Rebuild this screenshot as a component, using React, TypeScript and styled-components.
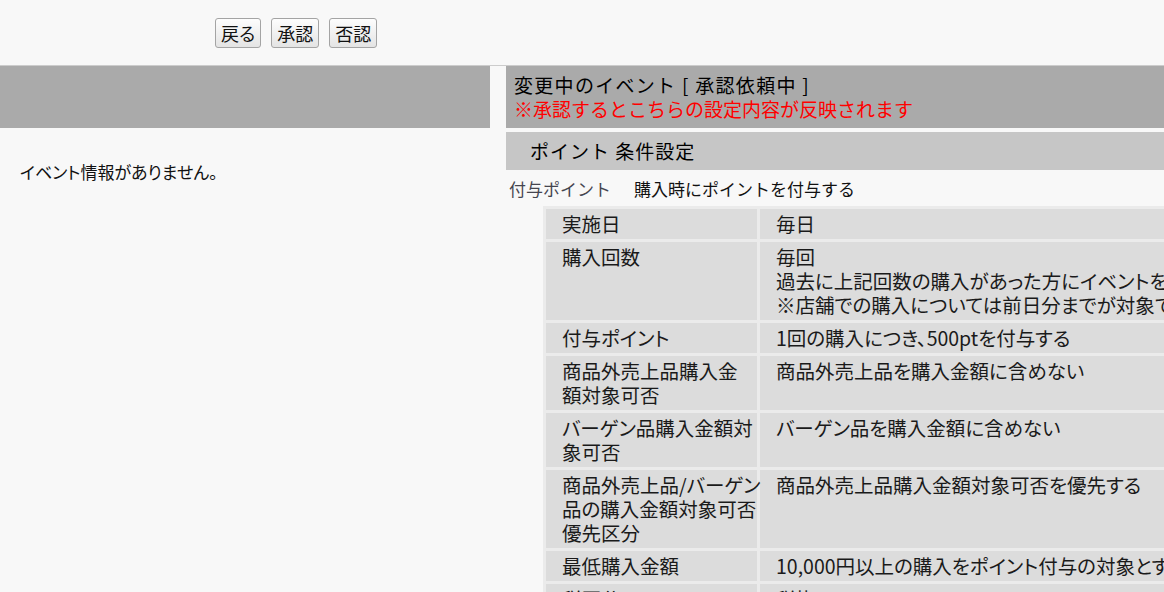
import styled, { createGlobalStyle } from "styled-components"

const GlobalStyle = createGlobalStyle`
    html, body {
        margin: 0;
        padding: 0;
        background: #f8f8f8;
        overflow: hidden;
    }
    body {
        font-family: "Noto Sans CJK JP", "Noto Sans", sans-serif;
        color: #111;
    }
`

type Row = { label: string[]; value: string[] }

const rows: Row[] = [
    { label: ["実施日"], value: ["毎日"] },
    {
        label: ["購入回数"],
        value: [
            "毎回",
            "過去に上記回数の購入があった方にイベントを適用します。",
            "※店舗での購入については前日分までが対象です。",
        ],
    },
    { label: ["付与ポイント"], value: ["1回の購入につき、500ptを付与する"] },
    { label: ["商品外売上品購入金", "額対象可否"], value: ["商品外売上品を購入金額に含めない"] },
    { label: ["バーゲン品購入金額対", "象可否"], value: ["バーゲン品を購入金額に含めない"] },
    {
        label: ["商品外売上品/バーゲン", "品の購入金額対象可否", "優先区分"],
        value: ["商品外売上品購入金額対象可否を優先する"],
    },
    { label: ["最低購入金額"], value: ["10,000円以上の購入をポイント付与の対象とする"] },
    { label: ["税区分"], value: ["税抜"] },
    { label: ["対象店舗"], value: ["全店舗"] },
]

function Lines({ lines }: { lines: string[] }) {
    return (
        <>
            {lines.map((l, i) => (
                <CellLine key={i}>{l}</CellLine>
            ))}
        </>
    )
}

function App() {
    return (
        <>
            <GlobalStyle />
            <TopBar>
                <Btn>戻る</Btn>
                <Btn>承認</Btn>
                <Btn>否認</Btn>
            </TopBar>
            <Columns>
                <LeftCol>
                    <PanelHeader />
                    <EmptyText>イベント情報がありません。</EmptyText>
                </LeftCol>
                <RightCol>
                    <PanelHeader>
                        <HeadTitle>変更中のイベント [ 承認依頼中 ]</HeadTitle>
                        <HeadNotice>※承認するとこちらの設定内容が反映されます</HeadNotice>
                    </PanelHeader>
                    <SectionTitle>ポイント 条件設定</SectionTitle>
                    <FieldRow>
                        <FieldLabel>付与ポイント</FieldLabel>
                        <FieldValue>購入時にポイントを付与する</FieldValue>
                    </FieldRow>
                    <DetailTable>
                        <tbody>
                            {rows.map((r, i) => (
                                <tr key={i}>
                                    <LabelCell>
                                        <Lines lines={r.label} />
                                    </LabelCell>
                                    <ValueCell>
                                        <Lines lines={r.value} />
                                    </ValueCell>
                                </tr>
                            ))}
                        </tbody>
                    </DetailTable>
                </RightCol>
            </Columns>
        </>
    )
}

export default App

const TopBar = styled.div`
    height: 66px;
    box-sizing: border-box;
    border-bottom: 1px solid #cccccc;
    display: flex;
    align-items: center;
    gap: 10px;
    padding: 0 0 0 215px;
`

const Btn = styled.button`
    height: 30px;
    padding: 0 5px;
    font-family: "Noto Sans CJK JP", sans-serif;
    font-feature-settings: "palt";
    font-size: 18px;
    line-height: 28px;
    color: #111;
    border: 1px solid #a4a4a4;
    border-radius: 3px;
    background: linear-gradient(#fdfdfd, #e4e4e4);
`

const Columns = styled.div`
    display: flex;
    gap: 16px;
    align-items: flex-start;
`

const LeftCol = styled.div`
    width: 490px;
    flex: none;
`

const RightCol = styled.div`
    flex: none;
    width: 780px;
`

const PanelHeader = styled.div`
    height: 62px;
    box-sizing: border-box;
    background: #aaaaaa;
    padding: 7px 8px;
`

const HeadTitle = styled.div`
    font-size: 19px;
    line-height: 24px;
    letter-spacing: 1.3px;
    color: #000;
`

const HeadNotice = styled.div`
    font-size: 19px;
    line-height: 24px;
    color: #ff0000;
`

const EmptyText = styled.div`
    margin-top: 34px;
    padding-left: 20px;
    font-size: 17px;
    line-height: 20px;
    font-feature-settings: "palt";
    color: #111;
`

const SectionTitle = styled.div`
    margin-top: 4px;
    height: 38px;
    line-height: 38px;
    padding-left: 24px;
    background: #c6c6c6;
    font-size: 19px;
    letter-spacing: 1px;
    color: #000;
`

const FieldRow = styled.div`
    height: 36px;
    display: flex;
    align-items: center;
    padding-left: 3px;
    font-size: 17px;
`

const FieldLabel = styled.div`
    width: 125px;
    color: #45454f;
`

const FieldValue = styled.div`
    color: #111;
`

const DetailTable = styled.table`
    margin-left: 37px;
    width: 820px;
    table-layout: fixed;
    background: #ebebeb;
    border-spacing: 3px;
    font-size: 19.5px;
    font-feature-settings: "palt";
    color: #1a1a1a;
`

const LabelCell = styled.td`
    width: 179px;
    background: #dcdcdc;
    padding: 3px 16px;
    vertical-align: top;
    white-space: nowrap;
`

const ValueCell = styled.td`
    background: #dcdcdc;
    padding: 3px 16px;
    vertical-align: top;
    white-space: nowrap;
`

const CellLine = styled.div`
    height: 24px;
    line-height: 24px;
`
